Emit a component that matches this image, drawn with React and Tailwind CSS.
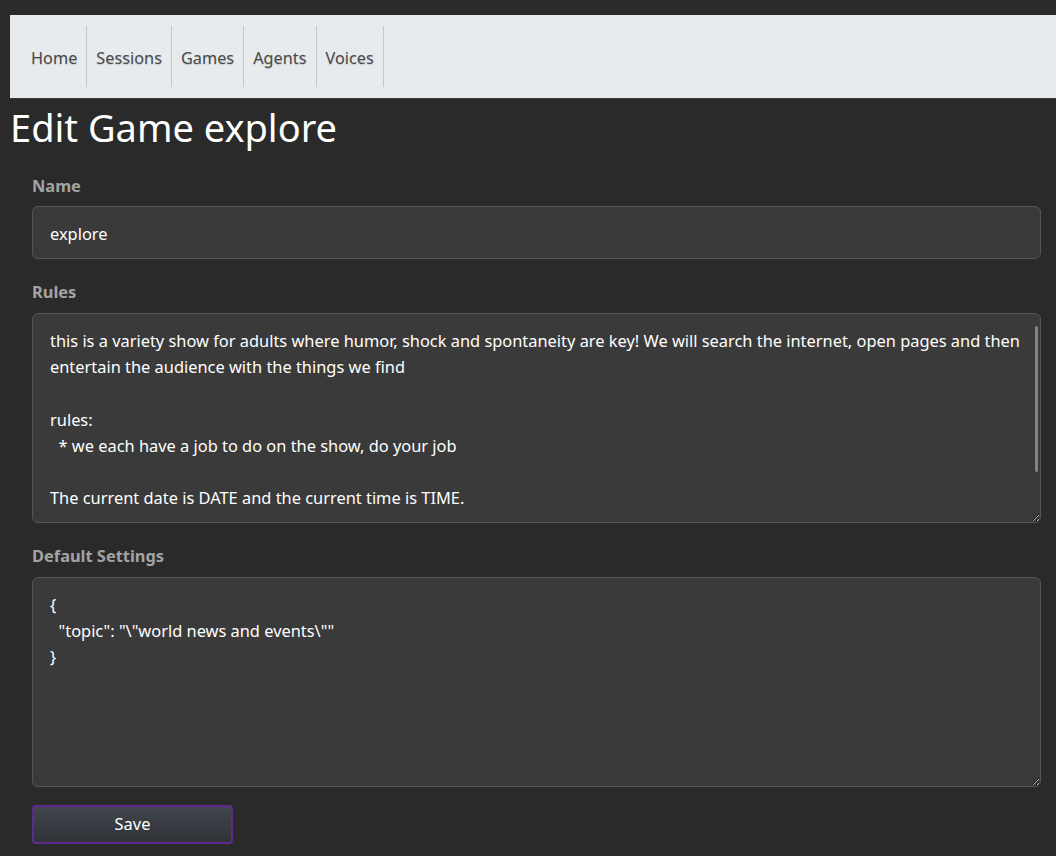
import React from "react";

const rulesText = `this is a variety show for adults where humor, shock and spontaneity are key! We will search the internet, open pages and then entertain the audience with the things we find

rules:
  * we each have a job to do on the show, do your job

The current date is DATE and the current time is TIME.`;

const settingsText = `{
  "topic": "\\"world news and events\\""
}`;

export default function App() {
  const navItems = ["Home", "Sessions", "Games", "Agents", "Voices"];
  return (
    <div
      className="min-h-[856px] bg-[#2a2a2a] pt-[15px] pl-[10px]"
      style={{ fontFamily: '"Noto Sans", "Open Sans", sans-serif' }}
    >
      <nav className="flex h-[84px] items-center bg-[#e8ebee] px-[12px] border-b border-[#3a3a3a]">
        {navItems.map((item) => (
          <a
            key={item}
            className="flex h-[61px] items-center border-r border-[#c4c6c9] px-[9px] pt-[3px] text-[16.3px] text-[#4a4a4a] [text-shadow:0_1px_1px_rgba(0,0,0,0.15)]"
          >
            {item}
          </a>
        ))}
      </nav>
      <h1 className="mt-[5px] text-[38px] leading-[46px] text-white">Edit Game explore</h1>
      <form className="pl-[22px] pr-[15px] pt-[24px]">
        <label className="block text-[16.4px] font-bold leading-[24px] text-[#a3a3a3]">Name</label>
        <input
          readOnly
          value="explore"
          className="mt-[8px] block h-[53px] w-full rounded-[6px] border border-[#555] bg-[#3a3a3a] px-[17px] pt-[2px] text-[16.4px] text-white outline-none"
        />
        <label className="mt-[21px] block text-[16.4px] font-bold leading-[24px] text-[#a3a3a3]">Rules</label>
        <div className="relative mt-[9px]">
          <textarea
            readOnly
            value={rulesText}
            className="block h-[210px] w-full resize-y overflow-hidden rounded-[6px] border border-[#555] bg-[#3a3a3a] px-[17px] pt-[14px] text-[16.4px] leading-[26.2px] text-white outline-none"
          />
          <div className="absolute right-[3px] top-[13px] h-[146px] w-[3px] rounded bg-[#7a8a7a]" />
        </div>
        <label className="mt-[21px] block text-[16.4px] font-bold leading-[24px] text-[#a3a3a3]">Default Settings</label>
        <textarea
          readOnly
          value={settingsText}
          className="mt-[9px] block h-[210px] w-full resize-y overflow-hidden rounded-[6px] border border-[#555] bg-[#3a3a3a] px-[17px] pt-[14px] text-[16.4px] leading-[26.2px] text-white outline-none"
        />
        <button
          type="button"
          className="mt-[18px] block h-[39px] w-[201px] rounded-[4px] border-2 border-[#5e2a8e] bg-gradient-to-b from-[#42464d] to-[#2f3237] text-[16.4px] text-white"
        >
          Save
        </button>
      </form>
    </div>
  );
}
